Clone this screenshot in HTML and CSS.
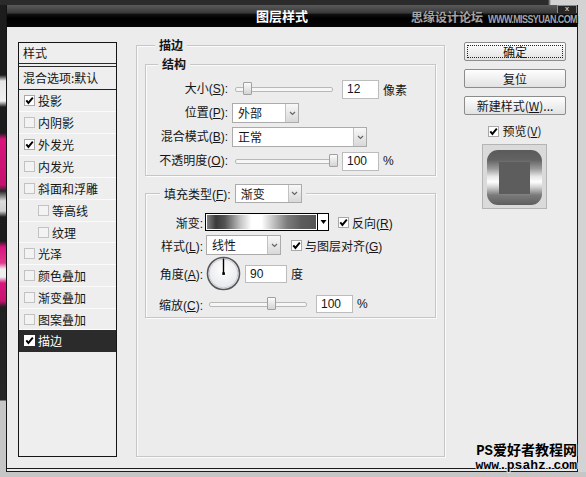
FILE: index.html
```html
<!DOCTYPE html>
<html>
<head>
<meta charset="utf-8">
<title>图层样式</title>
<link rel="stylesheet" href="styles.css">
</head>
<body>
<div class="screen">
  <div class="topstrip"></div>
  <div class="middle">
    <div class="leftstrip"></div>
    <div class="dialog">
      <div class="titlebar">
        <span class="title">图层样式</span>
        <span class="wm"><span class="wm-cn">思缘设计论坛</span><span class="wm-en">WWW.MISSYUAN.COM</span></span>
        <span class="close">x</span>
      </div>
      <div class="body">
        <div class="list">
          <div class="lhead">样式</div>
          <div class="lblend">混合选项:默认</div>
          <div class="litem"><span class="cb on"><svg width="9" height="9" viewBox="0 0 9 9"><polyline points="1.3,4.4 3.4,6.9 7.8,1.6" fill="none" stroke="#000" stroke-width="1.9"/></svg></span>投影</div>
          <div class="litem"><span class="cb"></span>内阴影</div>
          <div class="litem"><span class="cb on"><svg width="9" height="9" viewBox="0 0 9 9"><polyline points="1.3,4.4 3.4,6.9 7.8,1.6" fill="none" stroke="#000" stroke-width="1.9"/></svg></span>外发光</div>
          <div class="litem"><span class="cb"></span>内发光</div>
          <div class="litem"><span class="cb"></span>斜面和浮雕</div>
          <div class="litem indent"><span class="cb"></span>等高线</div>
          <div class="litem indent short"><span class="cb"></span>纹理</div>
          <div class="litem"><span class="cb"></span>光泽</div>
          <div class="litem"><span class="cb"></span>颜色叠加</div>
          <div class="litem"><span class="cb"></span>渐变叠加</div>
          <div class="litem short"><span class="cb"></span>图案叠加</div>
          <div class="litem selected"><span class="cb on"><svg width="9" height="9" viewBox="0 0 9 9"><polyline points="1.3,4.4 3.4,6.9 7.8,1.6" fill="none" stroke="#000" stroke-width="1.9"/></svg></span>描边</div>
        </div>

        <fieldset class="main">
          <legend class="lg-main">描边</legend>
          <fieldset class="struct">
            <legend class="lg-struct">结构</legend>
            <div class="sgrid">
              <span class="lab">大小(<u>S</u>):</span>
              <span class="ctl">
                <span class="slider w98"><span class="knob" style="left:7px"></span></span>
                <span class="inp w37 gap9">12</span>
                <span class="unit">像素</span>
              </span>
              <span class="lab">位置(<u>P</u>):</span>
              <span class="ctl">
                <span class="dd w67"><span class="val">外部</span><span class="arr"><svg width="7" height="5" viewBox="0 0 7 5"><polyline points="1,1 3.5,3.5 6,1" fill="none" stroke="#666" stroke-width="1.2"/></svg></span></span>
              </span>
              <span class="lab">混合模式(<u>B</u>):</span>
              <span class="ctl">
                <span class="dd w135"><span class="val">正常</span><span class="arr"><svg width="7" height="5" viewBox="0 0 7 5"><polyline points="1,1 3.5,3.5 6,1" fill="none" stroke="#666" stroke-width="1.2"/></svg></span></span>
              </span>
              <span class="lab">不透明度(<u>O</u>):</span>
              <span class="ctl">
                <span class="slider w102"><span class="knob" style="left:93px"></span></span>
                <span class="inp w37 gap5">100</span>
                <span class="unit">%</span>
              </span>
            </div>
          </fieldset>

          <fieldset class="fill">
            <legend class="lg-fill"><span>填充类型(<u>F</u>):</span><span class="dd w67"><span class="val">渐变</span><span class="arr"><svg width="7" height="5" viewBox="0 0 7 5"><polyline points="1,1 3.5,3.5 6,1" fill="none" stroke="#666" stroke-width="1.2"/></svg></span></span></legend>
            <div class="frow r-grad">
              <span class="flab">渐变:</span>
              <span class="grad"><span class="gbar"></span><span class="garr"><svg width="7" height="4" viewBox="0 0 7 4"><polygon points="0.5,0 6.5,0 3.5,4" fill="#000"/></svg></span></span>
              <span class="cb on gap9"><svg width="9" height="9" viewBox="0 0 9 9"><polyline points="1.3,4.4 3.4,6.9 7.8,1.6" fill="none" stroke="#000" stroke-width="1.9"/></svg></span>
              <span class="cbtext">反向(<u>R</u>)</span>
            </div>
            <div class="frow r-style">
              <span class="flab">样式(<u>L</u>):</span>
              <span class="dd w75"><span class="val">线性</span><span class="arr"><svg width="7" height="5" viewBox="0 0 7 5"><polyline points="1,1 3.5,3.5 6,1" fill="none" stroke="#666" stroke-width="1.2"/></svg></span></span>
              <span class="cb on gap10"><svg width="9" height="9" viewBox="0 0 9 9"><polyline points="1.3,4.4 3.4,6.9 7.8,1.6" fill="none" stroke="#000" stroke-width="1.9"/></svg></span>
              <span class="cbtext">与图层对齐(<u>G</u>)</span>
            </div>
            <div class="frow r-angle">
              <span class="flab">角度(<u>A</u>):</span>
              <svg class="dial" width="35" height="35" viewBox="0 0 35 35">
                <defs>
                  <radialGradient id="dg" cx="50%" cy="40%" r="60%">
                    <stop offset="0" stop-color="#ffffff"/>
                    <stop offset="1" stop-color="#e4e6ea"/>
                  </radialGradient>
                </defs>
                <circle cx="17.5" cy="17.5" r="16" fill="url(#dg)" stroke="#55575c" stroke-width="1.6"/>
                <circle cx="17.5" cy="17.5" r="14.4" fill="none" stroke="#c9ccd2" stroke-width="1"/>
                <line x1="17.5" y1="17.5" x2="17.5" y2="2.5" stroke="#000" stroke-width="1.4"/>
                <rect x="16.3" y="16.3" width="2.6" height="2.6" fill="#000"/>
              </svg>
              <span class="inp w42 gap4 h18">90</span>
              <span class="unit">度</span>
            </div>
            <div class="frow r-scale">
              <span class="flab">缩放(<u>C</u>):</span>
              <span class="slider w98 ml3"><span class="knob" style="left:57px"></span></span>
              <span class="inp w37 gap9 h18">100</span>
              <span class="unit">%</span>
            </div>
          </fieldset>
        </fieldset>

        <div class="side">
          <div class="btn focus">确定</div>
          <div class="btn">复位</div>
          <div class="btn">新建样式(<u>W</u>)...</div>
          <div class="pvcheck"><span class="cb on"><svg width="9" height="9" viewBox="0 0 9 9"><polyline points="1.3,4.4 3.4,6.9 7.8,1.6" fill="none" stroke="#000" stroke-width="1.9"/></svg></span><span>预览(<u>V</u>)</span></div>
          <div class="pv"><div class="pv-shape"><div class="pv-inner"></div></div></div>
        </div>
      </div>
    </div>
    <div class="rightstrip"></div>
  </div>
  <div class="bottomstrip"></div>
  <div class="psahz"><div class="ps1">PS爱好者教程网</div><div class="ps2">www.psahz.com</div></div>
</div>
</body>
</html>
```

FILE: styles.css
```css
* { box-sizing: border-box; }
html, body { margin: 0; padding: 0; }
body {
  width: 586px;
  height: 477px;
  overflow: hidden;
  background: #c8c8c8;
  font-family: "Liberation Sans", "Noto Sans CJK SC", sans-serif;
  font-size: 12px;
  color: #151515;
}
u { text-decoration: underline; text-underline-offset: 1px; }

.screen { position: relative; width: 586px; height: 477px; display: flex; flex-direction: column; }
.topstrip { height: 5px; background: linear-gradient(to right, #2b2b2b 0, #2b2b2b 548px, #d2d2d2 551px); }
.middle { display: flex; height: 467px; }
.leftstrip {
  width: 6px;
  background: linear-gradient(to bottom,
    #1c1c1c 0, #1c1c1c 70px, #e6e6e6 76px, #f0f0f0 96px, #1c1c1c 102px,
    #1c1c1c 128px, #d8157c 134px, #c4106e 180px, #262626 186px,
    #dcdcdc 196px, #d0d0d0 206px, #1c1c1c 212px, #1c1c1c 236px,
    #d8157c 242px, #e03a8e 258px, #eeeeee 264px, #eeeeee 272px, #d8157c 278px, #c8126f 296px,
    #202020 302px, #262626 395px, #c6c6c6 396px, #c6c6c6 100%);
}
.rightstrip { flex: 1; background: #d3d3d3; }
.bottomstrip { height: 5px; background: #c6c6c6; }

.dialog {
  width: 572px;
  display: flex;
  flex-direction: column;
  border-left: 1px solid #141414;
  border-right: 1px solid #1a1a1a;
}
.titlebar {
  position: relative;
  height: 22px;
  display: flex;
  align-items: center;
  padding: 0 0 0 249px;
  background: linear-gradient(to bottom, #5a5a5a 0, #3a3a3a 35%, #101010 43%, #000 60%, #070707 100%);
}
.title { color: #fff; font-weight: bold; font-size: 13px; line-height: 16px; font-family: "Noto Sans CJK SC", sans-serif; }
.wm { margin-left: auto; display: flex; align-items: center; gap: 5px; color: #a4a4a4; padding-top: 2px; }
.wm-cn { font-family: "Noto Sans CJK SC", sans-serif; font-size: 12px; font-weight: bold; line-height: 14px; text-shadow: 1px 1px 0 #000, -1px 0 0 #222; }
.wm-en {
  display: inline-block;
  font-size: 9px;
  font-weight: bold;
  letter-spacing: -0.6px;
  line-height: 9px;
  text-shadow: 1px 1px 0 #000;
  margin-top: 5px;
  transform: scaleY(1.25);
}
.close {
  position: absolute;
  top: 0;
  right: 0;
  width: 20px;
  height: 8px;
  border: 1px solid #8a8a8a;
  border-bottom: none;
  background: #262626;
  color: #eee;
  font-size: 8px;
  line-height: 6px;
  text-align: center;
  overflow: hidden;
}

.body {
  height: 445px;
  background: #ececec;
  border-bottom: 4px double #1c1c1c;
  padding: 10px 11px 11px 11px;
  display: flex;
  align-items: flex-start;
  gap: 19px;
}

/* left list */
.list {
  width: 99px;
  height: 415px;
  margin-top: 5px;
  border: 1px solid #151515;
  background: #eeeeee;
  font-family: "Noto Sans CJK SC", sans-serif;
}
.lhead { height: 24px; line-height: 20px; padding-left: 4px; border-bottom: 4px double #2a2a2a; }
.lblend { height: 23px; line-height: 22px; padding-left: 4px; border-bottom: 1px solid #222; white-space: nowrap; }
.litem {
  height: 22px;
  display: flex;
  align-items: center;
  gap: 3px;
  padding-left: 5px;
  border-bottom: 1px solid #fbfbfb;
  white-space: nowrap;
}
.litem.short { height: 21px; }
.litem.indent { padding-left: 19px; }
.litem.selected { background: #2b2b2b; color: #fff; border-bottom-color: #2b2b2b; }

.cb {
  width: 11px;
  height: 11px;
  flex: none;
  border: 1px solid #c2c2c2;
  background: #f3f3f3;
  display: inline-flex;
  align-items: center;
  justify-content: center;
}
.cb.on { background: #fff; border-color: #a8a8a8; }
.selected .cb { border-color: #fff; }

/* fieldsets */
fieldset {
  margin: 0;
  padding: 0;
  min-width: 0;
  border: 1px solid #c6c6c6;
  box-shadow: inset 1px 1px 0 #fbfbfb, 1px 1px 0 #fbfbfb;
}
legend { padding: 0 4px; background: #ececec; }
.main { width: 309px; height: 420px; padding: 3px 8px 0 8px; }
.lg-main { margin-left: 10px; font-weight: bold; line-height: 16px; font-family: "Noto Sans CJK SC", sans-serif; }
.struct { padding: 7px 0 4px 0; }
.lg-struct { margin-left: 12px; font-weight: bold; line-height: 16px; font-family: "Noto Sans CJK SC", sans-serif; }

.sgrid {
  display: grid;
  grid-template-columns: 82px 1fr;
  column-gap: 4px;
  row-gap: 4px;
  grid-auto-rows: 20px;
  align-items: center;
}
.lab { text-align: right; white-space: nowrap; line-height: 16px; }
.ctl { display: flex; align-items: center; height: 20px; }
.unit { margin-left: 4px; }

.slider {
  position: relative;
  height: 5px;
  margin-left: 3px;
  border: 1px solid #b8b8b8;
  border-radius: 2px;
  background: #f6f6f6;
  flex: none;
}
.knob {
  position: absolute;
  top: -6px;
  width: 9px;
  height: 13px;
  border: 1px solid #a0a0a0;
  border-radius: 1px;
  background: linear-gradient(#fbfbfb, #d4d4d4);
}
.w98 { width: 98px; }
.w102 { width: 102px; }
.ml3 { margin-left: 3px; }

.inp {
  height: 19px;
  border: 1px solid #bcbcbc;
  background: #fff;
  padding-left: 4px;
  line-height: 17px;
  flex: none;
}
.inp.h18 { height: 18px; line-height: 16px; }
.w37 { width: 37px; }
.w42 { width: 42px; }
.gap9 { margin-left: 9px; }
.gap5 { margin-left: 5px; }
.gap4 { margin-left: 4px; }
.gap10 { margin-left: 10px; }

.dd {
  display: flex;
  height: 20px;
  border: 1px solid #ababab;
  background: #fff;
  flex: none;
}
.dd .val { flex: 1; padding-left: 5px; line-height: 18px; font-family: "Noto Sans CJK SC", sans-serif; }
.dd .arr {
  width: 13px;
  border-left: 1px solid #c2c2c2;
  background: linear-gradient(#f8f8f8, #d8d8d8);
  display: flex;
  align-items: center;
  justify-content: center;
}
.w67 { width: 67px; }
.w75 { width: 75px; }
.w135 { width: 135px; }

.fill { margin-top: 8px; padding: 10px 0 4px 0; }
.lg-fill {
  margin-left: 14px;
  display: flex;
  align-items: center;
  gap: 4px;
  height: 19px;
  font-weight: normal;
}
.lg-fill .dd { height: 19px; }
.lg-fill .dd .val { line-height: 17px; }

.frow { display: flex; align-items: center; }
.flab { width: 57px; margin-right: 3px; text-align: right; white-space: nowrap; flex: none; }
.r-grad { height: 18px; }
.r-grad .flab { margin-right: 2px; }
.r-style { height: 20px; margin-top: 4px; }
.r-angle { height: 35px; margin-top: 1px; }
.r-scale { height: 18px; margin-top: 4px; }
.cbtext { margin-left: 3px; white-space: nowrap; }

.grad { display: flex; height: 18px; flex: none; }
.gbar {
  width: 113px;
  border: 1px solid #000;
  background: linear-gradient(to right, #8c8c8c 0%, #3a3a3a 9%, #545454 17%, #c4c4c4 31%, #fff 41%, #fff 50%, #c0c0c0 61%, #7c7c7c 73%, #5c5c5c 86%, #555 100%);
  box-shadow: inset 0 0 0 1px #fff;
}
.garr {
  width: 11px;
  border: 1px solid #000;
  border-left: none;
  background: #fff;
  display: flex;
  align-items: center;
  justify-content: center;
}
.dial { flex: none; display: block; }

/* right side */
.side { width: 102px; margin-top: 5px; display: flex; flex-direction: column; font-family: "Noto Sans CJK SC", sans-serif; }
.btn {
  position: relative;
  height: 19px;
  border: 1px solid #8c8c8c;
  border-radius: 2px;
  background: linear-gradient(#fefefe, #e2e2e2);
  text-align: center;
  line-height: 17px;
  white-space: nowrap;
}
.btn + .btn { margin-top: 8px; }
.btn.focus::after {
  content: "";
  position: absolute;
  top: 2px; left: 2px; right: 2px; bottom: 2px;
  border: 1px dotted #222;
}
.pvcheck {
  margin-top: 9px;
  height: 14px;
  display: flex;
  align-items: center;
  justify-content: center;
  gap: 3px;
  line-height: 14px;
}
.pv {
  width: 65px;
  height: 65px;
  margin: 6px 0 0 18px;
  border: 1px solid #b4b4b4;
  background: #dadada;
  padding: 5px 0 0 4px;
}
.pv-shape {
  width: 55px;
  height: 55px;
  border-radius: 11px;
  background: linear-gradient(to bottom, #5a5a5a 0%, #636363 18%, #9a9a9a 34%, #e6e6e6 48%, #ffffff 58%, #cfcfcf 68%, #7a7a7a 82%, #5e5e5e 100%);
  display: flex;
  align-items: center;
  justify-content: center;
}
.pv-inner { width: 31px; height: 32px; background: #5d5d5d; }

/* watermark overlay */
.psahz {
  position: absolute;
  right: 9px;
  bottom: 5px;
  text-align: right;
  color: #000;
  font-weight: bold;
  text-shadow: 1px 0 0 #eee, 0 1px 0 #eee, -1px 0 0 #eee;
}
.ps1 { font-family: "Liberation Mono", "Noto Sans CJK SC", monospace; font-size: 14px; line-height: 15px; }
.ps2 { font-family: "Liberation Mono", monospace; font-size: 13px; line-height: 13px; }
```
